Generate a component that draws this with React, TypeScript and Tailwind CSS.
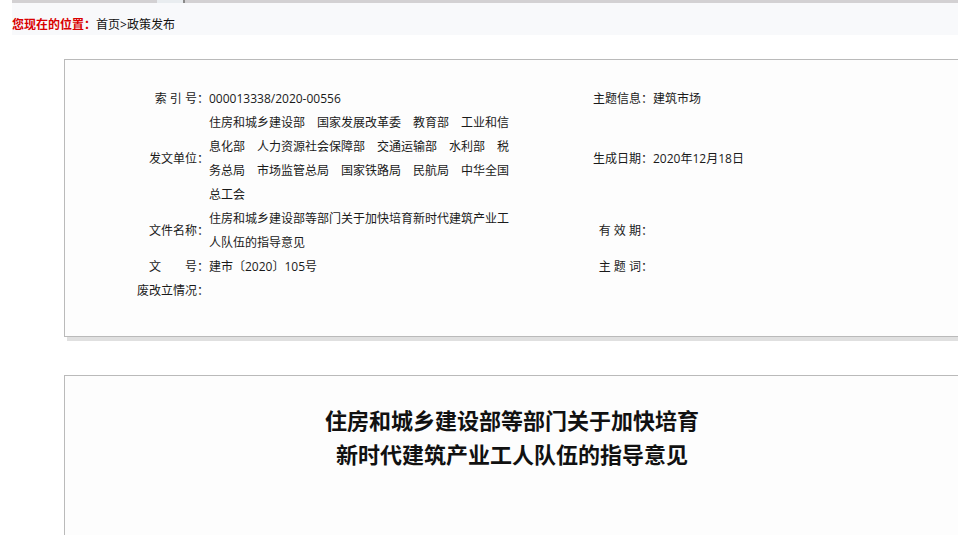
const units = [
  '住房和城乡建设部',
  '国家发展改革委',
  '教育部',
  '工业和信息化部',
  '人力资源社会保障部',
  '交通运输部',
  '水利部',
  '税务总局',
  '市场监管总局',
  '国家铁路局',
  '民航局',
  '中华全国总工会'
]

function Label({ children, className = '' }: { children: React.ReactNode; className?: string }) {
  return <div className={`text-right leading-6 whitespace-pre ${className}`}>{children}</div>
}

export default function App() {
  return (
    <div className="h-screen overflow-hidden bg-white font-['Open_Sans','Noto_Sans_CJK_SC',sans-serif] text-[12px] text-[#1a1a1a]">
      {/* breadcrumb */}
      <div className="ml-3">
        <div className="flex h-[3px]">
          <div className="w-[145px] bg-[#d3d1d3]" />
          <div className="w-[26px] bg-[#e9edf0]" />
          <div className="w-[2px] bg-[#8a8a8a]" />
          <div className="flex-1 bg-[#d3d1d3]" />
        </div>
        <div className="h-8 bg-[#f8f9fb] pt-[13px] leading-[18px]">
          <span className="font-bold text-[#d90000]">您现在的位置：</span>
          <span className="text-[#111]">首页&gt;政策发布</span>
        </div>
      </div>

      {/* info card */}
      <div className="ml-16 mt-6 w-[896px] border border-[#bababa] bg-[#fdfdfd] pt-[27px] pb-[33px] shadow-[3px_4px_0_#e0e0e0]">
        <div className="grid grid-cols-[144px_302px_142px_1fr] items-center">
          <Label>索 引 号：</Label>
          <div className="leading-6">000013338/2020-00556</div>
          <Label>主题信息：</Label>
          <div className="leading-6">建筑市场</div>

          <Label>发文单位：</Label>
          <div className="leading-6">{units.join('　')}</div>
          <Label>生成日期：</Label>
          <div className="leading-6">2020年12月18日</div>

          <Label>文件名称：</Label>
          <div className="leading-6">住房和城乡建设部等部门关于加快培育新时代建筑产业工人队伍的指导意见</div>
          <Label>有 效 期：</Label>
          <div className="leading-6" />

          <Label>文　　号：</Label>
          <div className="leading-6">建市〔2020〕105号</div>
          <Label>主 题 词：</Label>
          <div className="leading-6" />

          <Label>废改立情况：</Label>
          <div className="leading-6" />
          <div />
          <div />
        </div>
      </div>

      {/* title card */}
      <div className="ml-16 mt-[38px] h-[300px] w-[896px] border border-[#bababa] bg-[#fdfdfd] pt-[26px]">
        <h1 className="text-center font-['Noto_Sans_CJK_SC',sans-serif] text-[22px] font-bold leading-[34px] text-[#111]">
          住房和城乡建设部等部门关于加快培育
          <br />
          新时代建筑产业工人队伍的指导意见
        </h1>
      </div>
    </div>
  )
}
